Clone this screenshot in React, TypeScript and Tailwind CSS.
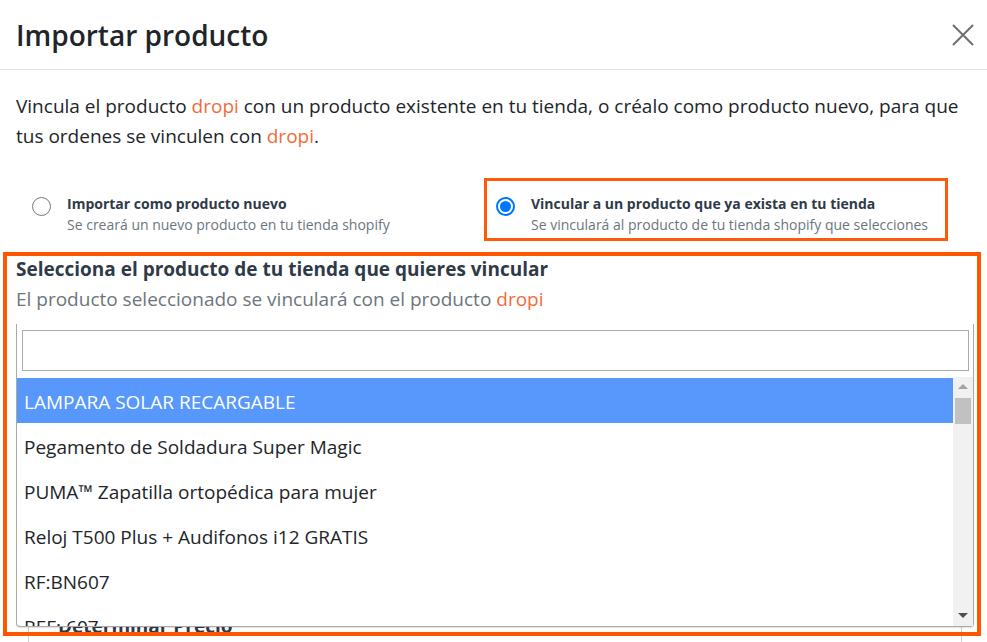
const products = [
  'LAMPARA SOLAR RECARGABLE',
  'Pegamento de Soldadura Super Magic',
  'PUMA™ Zapatilla ortopédica para mujer',
  'Reloj T500 Plus + Audifonos i12 GRATIS',
  'RF:BN607',
  'REF: 607',
];

function Radio({ checked }: { checked: boolean }) {
  if (checked) {
    return (
      <span className="mt-[4px] flex h-[19px] w-[19px] shrink-0 items-center justify-center rounded-full border-[2px] border-[#0075ff] bg-white">
        <span className="h-[11px] w-[11px] rounded-full bg-[#0075ff]" />
      </span>
    );
  }

  return (
    <span className="mt-[4px] h-[19px] w-[19px] shrink-0 rounded-full border border-[#767676] bg-white" />
  );
}

export default function App() {
  return (
    <div className="relative h-[642px] w-full overflow-hidden bg-white font-['Open_Sans',sans-serif] text-[#212529]">
      <header className="flex h-[70px] items-center justify-between border-b border-[#dee2e6] pl-4 pr-[13px]">
        <h1 className="text-[28px] font-semibold leading-none">
          Importar producto
        </h1>

        <button type="button" className="text-[#6f6f6f]">
          <svg width="22" height="22" viewBox="0 0 22 22">
            <path
              d="M1 1 L21 21 M21 1 L1 21"
              stroke="currentColor"
              strokeWidth="2"
              fill="none"
            />
          </svg>
        </button>
      </header>

      <div className="px-4">
        <p className="pt-[21px] text-[19px] leading-[30px]">
          Vincula el producto{' '}
          <span className="text-[#f26b3a]">dropi</span> con un producto
          existente en tu tienda, o créalo como producto nuevo, para que tus
          ordenes se vinculen con{' '}
          <span className="text-[#f26b3a]">dropi</span>.
        </p>

        <div className="mt-[27px] flex">
          <label className="flex w-[468px] gap-4 pl-4 pt-[15px]">
            <Radio checked={false} />
            <span className="text-[14px] leading-[21px]">
              <span className="block font-bold text-[#2f3a48]">
                Importar como producto nuevo
              </span>
              <span className="block text-[#6c757d]">
                Se creará un nuevo producto en tu tienda shopify
              </span>
            </span>
          </label>

          <label className="flex w-[464px] gap-4 border-[3px] border-[#ff5a0a] pb-[3px] pl-[9px] pt-[12px]">
            <Radio checked />
            <span className="text-[14px] leading-[21px]">
              <span className="block font-bold text-[#2f3a48]">
                Vincular a un producto que ya exista en tu tienda
              </span>
              <span className="block text-[#6c757d]">
                Se vinculará al producto de tu tienda shopify que selecciones
              </span>
            </span>
          </label>
        </div>

        <h2 className="mt-[14px] text-[19px] font-bold leading-[28px] text-[#2f3a48]">
          Selecciona el producto de tu tienda que quieres vincular
        </h2>
        <p className="mt-[1px] text-[19px] leading-[30px] text-[#6c757d]">
          El producto seleccionado se vinculará con el producto{' '}
          <span className="text-[#f26b3a]">dropi</span>
        </p>

        <div className="relative pt-[10px]">
          <div className="ml-[12px] h-[400px] w-[934px] border border-[#cfcfcf] pl-[29px] pt-[288px]">
            <h3 className="text-[19px] font-bold leading-[26px] text-[#2f3a48]">
              Determinar Precio
            </h3>
            <p className="text-[14px] leading-[20px] text-[#6c757d]">
              Ingresa el precio con el que venderás este producto en tu tienda
              shopify
            </p>
          </div>

          <div className="absolute left-0 top-[10px] flex h-[303px] w-[958px] flex-col rounded-b border-x border-b border-[#aaa] bg-white shadow-[0_1px_1px_rgba(0,0,0,0.12)]">
            <div className="pb-[6px] pl-[5px] pr-[4px] pt-[6px]">
              <input
                type="text"
                className="h-[41px] w-full border border-[#aaa] px-2 text-[19px] outline-none"
              />
            </div>

            <div className="flex min-h-0 flex-1">
              <ul className="flex-1 overflow-hidden pt-[1px]">
                {products.map((product, index) => (
                  <li
                    key={product}
                    className={
                      index === 0
                        ? 'flex h-[45px] shrink-0 items-center bg-[#5897fb] pl-[7px] pt-[3px] text-[19px] text-white'
                        : 'flex h-[45px] shrink-0 items-center pl-[7px] pt-[3px] text-[19px] text-[#212529]'
                    }
                  >
                    {product}
                  </li>
                ))}
              </ul>

              <div className="flex w-[20px] flex-col items-center bg-[#f1f1f1]">
                <div className="mt-[7px] h-0 w-0 border-x-[5px] border-b-[5px] border-x-transparent border-b-[#a3a3a3]" />
                <div className="mt-[9px] h-[26px] w-[16px] bg-[#c1c1c1]" />
                <div className="flex-1" />
                <div className="mb-[8px] h-0 w-0 border-x-[5px] border-t-[5px] border-x-transparent border-t-[#505050]" />
              </div>
            </div>
          </div>
        </div>
      </div>

      <div className="pointer-events-none absolute left-[3px] top-[252px] h-[384px] w-[978px] border-[4px] border-[#ff5500]" />
    </div>
  );
}
